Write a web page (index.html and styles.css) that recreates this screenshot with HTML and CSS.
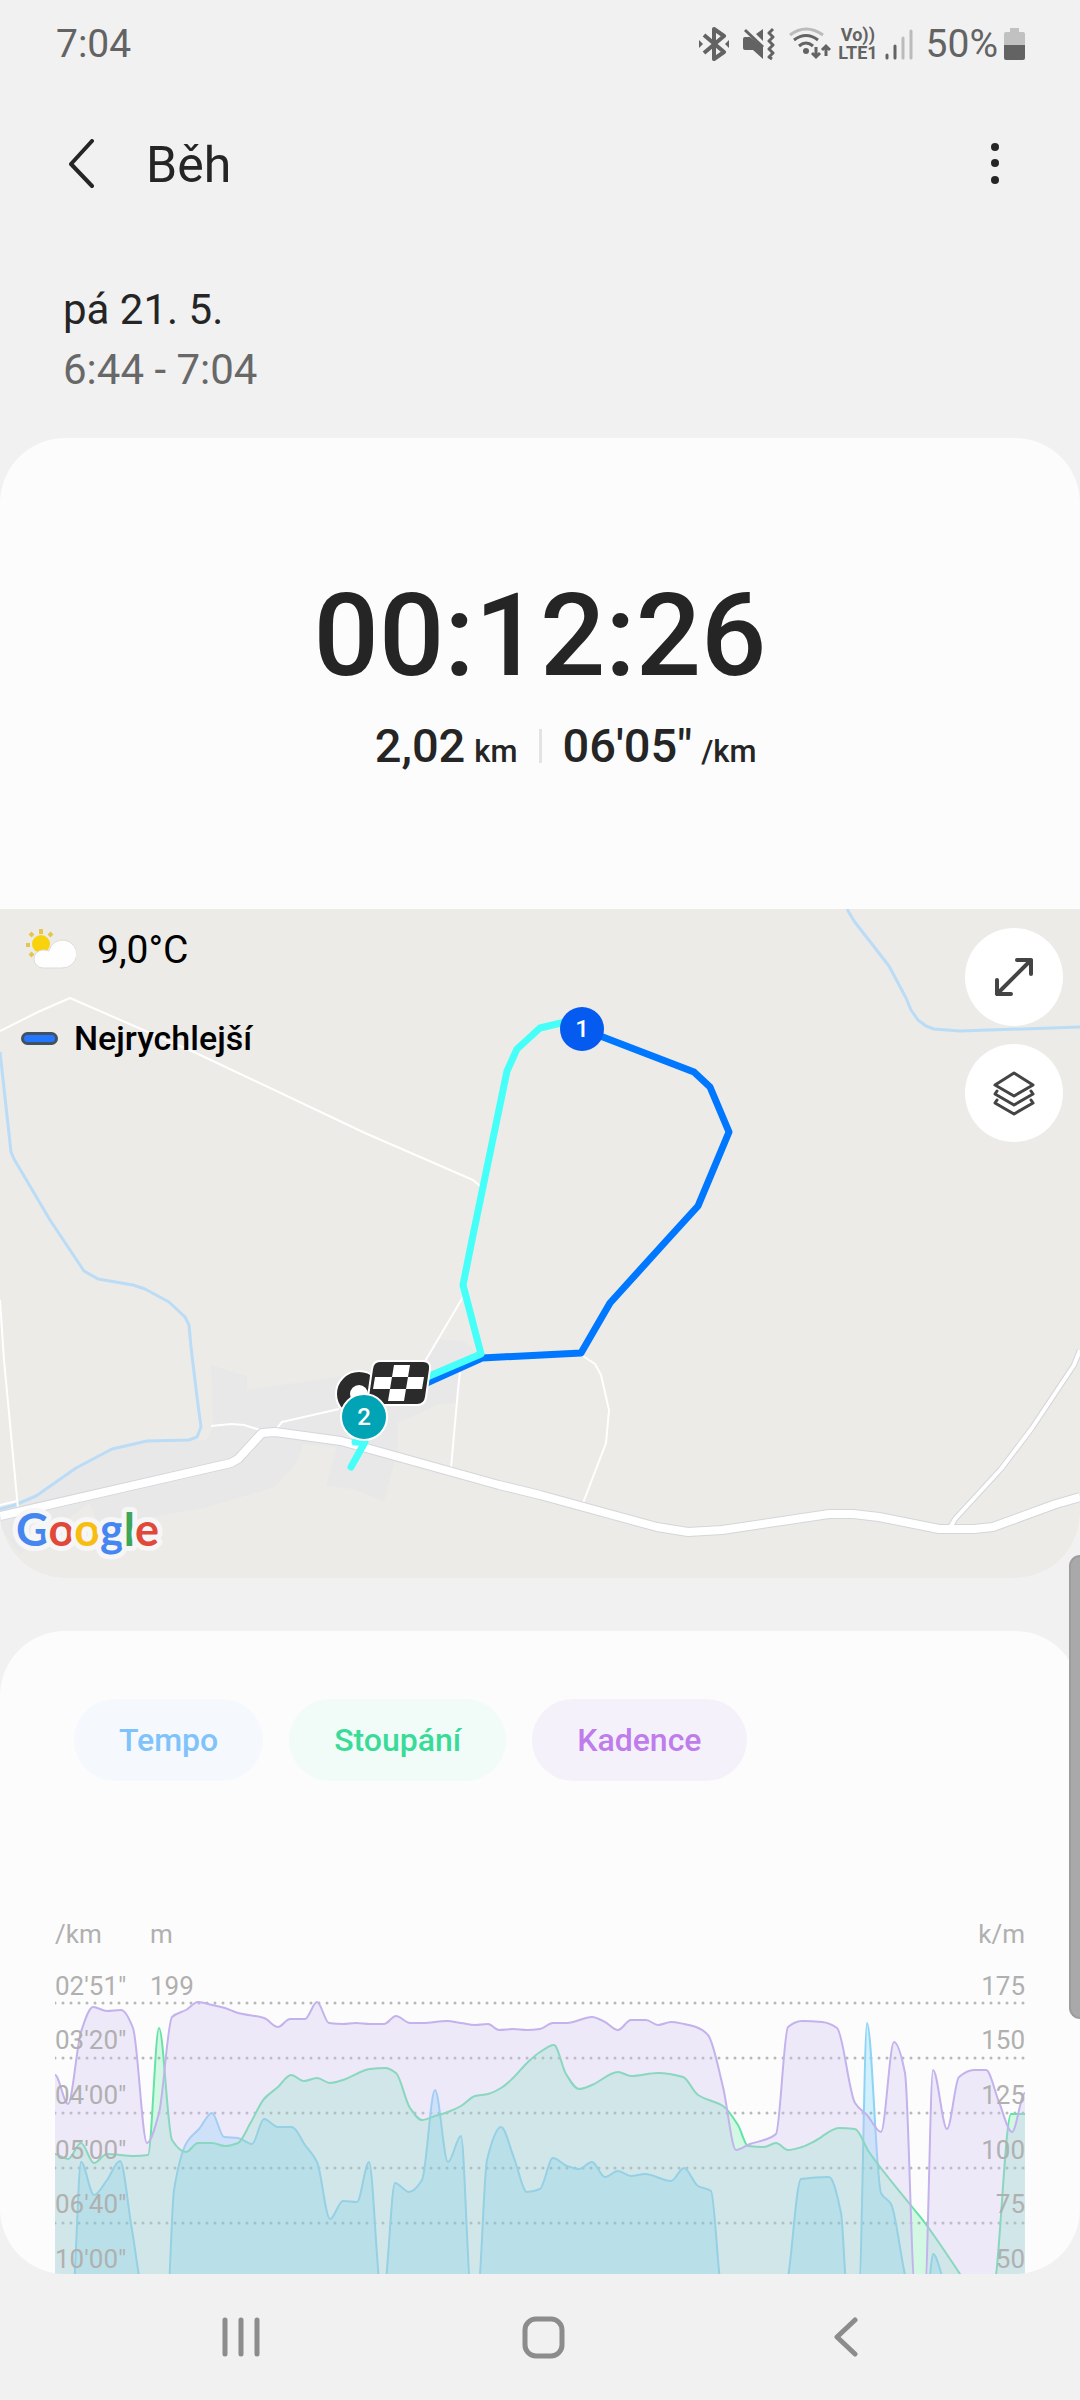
FILE: index.html
```
<!DOCTYPE html>
<html lang="cs">

<head>
    <meta charset="UTF-8">
    <meta name="viewport" content="width=device-width, initial-scale=1">
    <title>Běh</title>
    <link rel="stylesheet" href="styles.css">
</head>

<body>

    <div class="status-bar">
        <span class="clock">7:04</span>
        <div class="status-icons">
            <svg class="ic-bt" width="30" height="34" viewBox="0 0 30 34">
                <path d="M5 8 L25 25 L15 32 V2 L25 9 L5 26" fill="none" stroke="#636363" stroke-width="4" stroke-linejoin="round"/>
                <path d="M0 13 L4 17 L0 21 Z M30 13 L26 17 L30 21 Z" fill="#636363"/>
            </svg>
            <svg class="ic-mute" width="32" height="34" viewBox="0 0 32 34">
                <path d="M2 10 H7 L20 20 V32 L10 23 H2 Q0 23 0 21 V12 Q0 10 2 10 Z M20 2 V14 L13 7 Z" fill="#636363"/>
                <path d="M2 3 L20 20" stroke="#636363" stroke-width="3"/>
                <path d="M30 2 L26 6 L30 10 L26 14 L30 18 L26 22 L30 26 L26 30 L29 32" fill="none" stroke="#636363" stroke-width="3" stroke-linejoin="round"/>
            </svg>
            <svg class="ic-wifi" width="42" height="34" viewBox="0 0 42 34">
                <path d="M1 8 Q17 -4 34 8" fill="none" stroke="#bbb" stroke-width="3"/>
                <path d="M5 13 Q17 4 29 13 M10 19 Q17 13 24 19" fill="none" stroke="#636363" stroke-width="3"/>
                <circle cx="17" cy="24" r="3" fill="#636363"/>
                <path d="M27 20 V29 M23 26 L27 30 L31 26 M37 29 V20 M33 23 L37 19 L41 23" fill="none" stroke="#636363" stroke-width="3"/>
            </svg>
            <span class="volte"><span>Vo))</span><span>LTE1</span></span>
            <svg class="ic-signal" width="28" height="34" viewBox="0 0 28 34">
                <path d="M2 28 V31 M10 19 V31" stroke="#636363" stroke-width="3" stroke-linecap="round"/>
                <path d="M18 11 V31 M26 4 V31" stroke="#bbb" stroke-width="3" stroke-linecap="round"/>
            </svg>
            <span class="battery-text">50%</span>
            <svg class="ic-battery" width="21" height="34" viewBox="0 0 21 34">
                <path d="M6 1 H15 V5 H19 Q21 5 21 7 V18 H0 V7 Q0 5 2 5 H6 Z" fill="#c1c1c1"/>
                <path d="M0 18 H21 V31 Q21 33 19 33 H2 Q0 33 0 31 Z" fill="#636363"/>
            </svg>
        </div>
    </div>

    <header class="app-bar">
        <button class="icon-btn" type="button" aria-label="Zpět">
            <svg width="28" height="52" viewBox="0 0 28 52">
                <path d="M25 2 L4 25 L25 47" fill="none" stroke="#252525" stroke-width="4" stroke-linecap="round" stroke-linejoin="round"/>
            </svg>
        </button>
        <h1>Běh</h1>
        <button class="icon-btn more" type="button" aria-label="Další možnosti">
            <svg width="10" height="44" viewBox="0 0 10 44">
                <g fill="#252525"><circle cx="5" cy="4" r="4"/><circle cx="5" cy="20" r="4"/><circle cx="5" cy="37" r="4"/></g>
            </svg>
        </button>
    </header>

    <main>
        <div class="when">
            <p class="day">pá 21. 5.</p>
            <p class="hours">6:44 - 7:04</p>
        </div>

        <section class="card">
            <div class="timer">00:12:26</div>
            <div class="stats">
                <p class="stat left">2,02<small>km</small></p>
                <span class="divider"></span>
                <p class="stat">06'05"<small>/km</small></p>
            </div>

            <div class="map">
                <svg class="map-canvas" viewBox="0 0 1080 669">
                    <rect width="1080" height="669" fill="#ecebe7"/>
                    <!-- built-up area -->
                    <path fill="#e8e8e8" d="M211 456 L247 467 V481 L336 468 L427 450 L437 430 L465 433 L482 448 L460 463 L456 494 L439 495 L398 514 L397 544 L384 592 L353 580 L326 577 L337 538 L303 535 L297 553 L275 578 L207 598 L100 618 L89 594 L55 620 L20 645 L0 618 V598 L36 587 L76 559 L112 540 L147 532 L207 531 L213 518 Z"/>
                    <!-- rivers -->
                    <g fill="none" stroke="#bbdcf6" stroke-width="3" stroke-linejoin="round">
                        <path d="M0 143 L11 243 L14 250 L50 311 L84 362 L98 370 L133 376 L145 380 L169 393 L185 408 L189 416 L191 438 L197 488 L201 518 L197 528 L189 531 L147 532 L112 540 L76 559 L36 587 L15 596 L0 600"/>
                        <path d="M847 0 L854 12 L889 57 L906 89 L911 101 L918 111 L926 117 L934 120 L960 122 L1080 118"/>
                    </g>
                    <!-- paths -->
                    <g fill="none" stroke="#fff" stroke-width="2" stroke-linejoin="round">
                        <path d="M0 122 L38 103 L70 89 L196 144 L365 224 L473 271 L480 277"/>
                        <path d="M0 391 L4 451 L17 589 L18 600 M0 596 L17 592"/>
                        <path d="M583 447 L595 455 L601 466 L609 501 L606 534 L583 594"/>
                        <path d="M460 463 L458 481 L451 559 M463 388 L424 454"/>
                        <path d="M277 519 L282 513 L339 500 M211 517 L231 515 L244 516 L260 521"/>
                    </g>
                    <!-- roads -->
                    <g fill="none" stroke-linejoin="round">
                        <path stroke="#d3d6da" stroke-width="6" d="M951 617 L955 610 L1001 560 L1032 519 L1074 456 L1080 441"/>
                        <path stroke="#d3d6da" stroke-width="10" d="M0 607 L231 554 L238 550 L262 524 L275 523 L341 532 L499 576 L540 586 L657 618 L688 623 L722 621 L829 605 H853 L879 608 L939 620 H974 L993 618 L1056 595 L1080 588"/>
                        <path stroke="#fff" stroke-width="4" d="M951 617 L955 610 L1001 560 L1032 519 L1074 456 L1080 441"/>
                        <path stroke="#fff" stroke-width="8" d="M0 607 L231 554 L238 550 L262 524 L275 523 L341 532 L499 576 L540 586 L657 618 L688 623 L722 621 L829 605 H853 L879 608 L939 620 H974 L993 618 L1056 595 L1080 588"/>
                    </g>
                    <!-- track -->
                    <g fill="none" stroke-width="7" stroke-linejoin="round" stroke-linecap="round">
                        <path stroke="#0077ff" d="M582 120 L694 163 L710 178 L729 223 L698 297 L667 331 L610 394 L581 444 L482 449 L400 486"/>
                        <path stroke="#45fff8" d="M582 109 L561 114 L540 119 L517 140 L507 162 L472 331 L463 376 L481 445 L420 471"/>
                        <path stroke="#45fff8" d="M355 533 L365 533 L351 558"/>
                    </g>
                    <!-- start -->
                    <circle cx="359" cy="485" r="23" fill="#2b2b2b" stroke="#fff" stroke-width="2"/>
                    <circle cx="359" cy="485" r="9" fill="#fff"/>
                    <!-- finish flag -->
                    <path d="M380 452 H423 Q431 452 430 460 L426 488 Q425 496 417 496 H375 Q367 496 368 488 L372 460 Q373 452 380 452 Z" fill="#2b2b2b" stroke="#fff" stroke-width="2"/>
                    <path d="M394 456 H410 L408 468 H392 Z M375 468 H392 L390 480 H373 Z M408 468 H424 L422 480 H406 Z M390 480 H406 L404 492 H388 Z" fill="#fff"/>
                    <!-- kilometre marks -->
                    <g class="km-mark">
                        <circle cx="582" cy="120" r="22" fill="#055bef"/>
                        <text x="582" y="128">1</text>
                        <circle cx="364" cy="508" r="23" fill="#00a4b5" stroke="#fff" stroke-width="2"/>
                        <text x="364" y="516">2</text>
                    </g>
                    <text class="google" x="16" y="637"><tspan fill="#4686f0">G</tspan><tspan fill="#e04839">o</tspan><tspan fill="#f8bd12">o</tspan><tspan fill="#4686f0">g</tspan><tspan fill="#3ca757">l</tspan><tspan fill="#e04839">e</tspan></text>
                </svg>

                <div class="map-info">
                    <div class="weather">
                        <svg width="50" height="42" viewBox="0 0 50 42">
                            <path d="M15 0 V5 M4 4 L7 7 M26 4 L23 7 M0 16 H4 M4 27 L7 24" stroke="#e2c64f" stroke-width="4"/>
                            <circle cx="15" cy="15" r="9" fill="#f8d20c"/>
                            <path d="M17 39 A9 9 0 0 1 17 21 Q20 21 23 22 A14 14 0 1 1 36 39 Z" fill="#fefefe" stroke="#dddcd8" stroke-width="1"/>
                        </svg>
                        <span>9,0°C</span>
                    </div>
                    <div class="legend"><i></i><span>Nejrychlejší</span></div>
                </div>

                <div class="map-tools">
                    <button type="button" aria-label="Zvětšit mapu">
                        <svg width="44" height="44" viewBox="0 0 44 44">
                            <path d="M5 39 L39 5 M25 5 H39 V19 M5 25 V39 H19" fill="none" stroke="#444" stroke-width="4" stroke-linecap="round" stroke-linejoin="round"/>
                        </svg>
                    </button>
                    <button type="button" aria-label="Vrstvy">
                        <svg width="46" height="48" viewBox="0 0 46 48">
                            <path d="M23 4 L42 16 L23 27 L4 16 Z M6 22 L4 25 L23 36 L42 25 L40 22 M6 31 L4 34 L23 45 L42 34 L40 31" fill="none" stroke="#444" stroke-width="3" stroke-linecap="round" stroke-linejoin="round"/>
                        </svg>
                    </button>
                </div>
            </div>
        </section>

        <section class="card chart-card">
            <div class="series">
                <button class="pace" type="button">Tempo</button>
                <button class="climb" type="button">Stoupání</button>
                <button class="cadence" type="button">Kadence</button>
            </div>
            <div class="axis-head">
                <span class="axis-pace">/km</span><span>m</span><span class="axis-right">k/m</span>
            </div>
            <div class="plot">
                <svg id="chart" viewBox="0 0 970 328" preserveAspectRatio="none"></svg>
                <ul class="axis">
                    <li><span class="axis-pace">02'51"</span><span>199</span><span class="axis-right">175</span></li>
                    <li><span class="axis-pace">03'20"</span><span class="axis-right">150</span></li>
                    <li><span class="axis-pace">04'00"</span><span class="axis-right">125</span></li>
                    <li><span class="axis-pace">05'00"</span><span class="axis-right">100</span></li>
                    <li><span class="axis-pace">06'40"</span><span class="axis-right">75</span></li>
                    <li><span class="axis-pace">10'00"</span><span class="axis-right">50</span></li>
                </ul>
            </div>
        </section>
    </main>

    <div class="scroll-thumb"></div>

    <nav class="nav-bar">
        <button type="button" aria-label="Poslední aplikace">
            <svg width="42" height="42" viewBox="0 0 42 42">
                <path d="M5 4 V38 M21 4 V38 M37 4 V38" stroke="#8c8c8c" stroke-width="5" stroke-linecap="round"/>
            </svg>
        </button>
        <button type="button" aria-label="Domů">
            <svg width="44" height="44" viewBox="0 0 44 44">
                <rect x="4" y="4" width="37" height="37" rx="11" fill="none" stroke="#8c8c8c" stroke-width="5"/>
            </svg>
        </button>
        <button type="button" aria-label="Zpět">
            <svg width="26" height="42" viewBox="0 0 26 42">
                <path d="M23 4 L5 21 L23 38" fill="none" stroke="#8c8c8c" stroke-width="5" stroke-linecap="round" stroke-linejoin="round"/>
            </svg>
        </button>
    </nav>

    <script src="chart.js"></script>

</body>

</html>
```

FILE: styles.css
```
* {
    box-sizing: border-box;
}

body {
    position: relative;
    margin: 0;
    background: #f1f1f1;
    color: #252525;
    font-family: Roboto, "Noto Sans", sans-serif;
}

h1, p, ul {
    margin: 0;
    padding: 0;
    font-weight: 400;
}

button {
    padding: 0;
    border: 0;
    background: none;
    font-family: inherit;
}

svg {
    display: block;
}

/* status bar */
.status-bar {
    display: flex;
    justify-content: space-between;
    align-items: center;
    height: 88px;
    padding: 0 55px 0 56px;
    color: #636363;
    font-size: 39px;
}

.status-icons {
    display: flex;
    align-items: center;
}

.ic-mute, .ic-wifi {
    margin-left: 14px;
}

.volte {
    display: flex;
    flex-direction: column;
    margin: 0 7px;
    font-size: 18px;
    font-weight: 700;
    line-height: 18px;
    text-align: center;
}

.battery-text {
    margin: 0 6px 0 13px;
}

/* header */
.app-bar {
    display: flex;
    align-items: center;
    height: 154px;
    padding: 0 80px 0 67px;
}

.app-bar h1 {
    flex: 1;
    margin-left: 51px;
    font-size: 50px;
}

.when {
    padding: 38px 63px;
    font-size: 42px;
    line-height: 60px;
}

.hours {
    color: #686868;
}

/* cards */
.card {
    overflow: hidden;
    border-radius: 65px;
    background: #fcfcfc;
}

.timer {
    padding-top: 138px;
    font-size: 115px;
    font-weight: 500;
    line-height: 120px;
    text-align: center;
}

.stats {
    display: grid;
    grid-template-columns: 1fr auto 1fr;
    align-items: center;
    gap: 21px;
    margin-top: 22px;
    padding-bottom: 135px;
}

.stat {
    font-size: 47px;
    font-weight: 500;
    line-height: 56px;
}

.stat small {
    margin-left: 9px;
    font-size: 31px;
    line-height: 31px;
}

.left {
    text-align: right;
}

.divider {
    width: 3px;
    height: 34px;
    background: #e3e3e3;
}

/* map */
.map {
    position: relative;
}

.map-canvas {
    width: 100%;
}

.km-mark {
    fill: #fff;
    font-size: 24px;
    font-weight: 500;
    text-anchor: middle;
}

.google {
    font-family: Lato, sans-serif;
    font-size: 45px;
    font-weight: 700;
    paint-order: stroke;
    stroke: #f6f6f6;
    stroke-width: 10px;
    stroke-linejoin: round;
}

.map-info {
    position: absolute;
    top: 17px;
    left: 21px;
    color: #000;
}

.weather {
    display: flex;
    align-items: center;
    gap: 21px;
    padding-left: 5px;
    font-size: 39px;
    line-height: 48px;
}

.legend {
    display: flex;
    align-items: center;
    gap: 16px;
    margin-top: 44px;
    font-size: 34px;
    font-weight: 500;
    line-height: 40px;
}

.legend i {
    width: 37px;
    height: 13px;
    border: 3px solid #43505f;
    border-radius: 7px;
    background: #2476ff;
}

.map-tools {
    position: absolute;
    top: 19px;
    right: 17px;
    display: grid;
    gap: 18px;
}

.map-tools button {
    display: flex;
    align-items: center;
    justify-content: center;
    width: 98px;
    height: 98px;
    border-radius: 50%;
    background: #fff;
}

/* chart */
.chart-card {
    margin-top: 53px;
    padding: 68px 55px 0;
}

.series {
    display: flex;
    gap: 26px;
    padding-left: 19px;
}

.series button {
    height: 82px;
    padding: 0 45px;
    border-radius: 41px;
    font-size: 32px;
    font-weight: 500;
}

.series .pace {
    background: #f5f9fd;
    color: #80c3fb;
}

.series .climb {
    background: #f1fcf8;
    color: #3adb98;
}

.series .cadence {
    background: #f5f1fb;
    color: #be7dea;
}

.axis-head, .axis li {
    display: flex;
    align-items: flex-end;
    color: #b0b0b0;
    font-size: 26px;
    line-height: 28px;
}

.axis-head {
    margin-top: 139px;
}

.axis-pace {
    width: 95px;
}

.axis-right {
    margin-left: auto;
}

/* last row runs slightly under the screen edge */
.plot {
    position: relative;
    height: 328px;
    margin-bottom: -2px;
}

.plot svg {
    position: absolute;
    width: 100%;
    height: 100%;
}

.axis {
    position: relative;
    display: grid;
    grid-template-rows: repeat(6, 1fr);
    height: 100%;
}

.axis li {
    padding-bottom: 3px;
}

.grid-line {
    fill: none;
    stroke: #b8b8b8;
    stroke-width: 3px;
    stroke-linecap: round;
    stroke-dasharray: 0 8;
}

.area-pace {
    fill: rgba(32, 197, 255, .2);
    stroke: #8cd3f5;
}

.area-climb {
    fill: rgba(47, 237, 137, .2);
    stroke: #66e2a6;
}

.area-cadence {
    fill: rgba(209, 193, 243, .32);
    stroke: #c3b2ec;
}

.area {
    stroke-width: 2px;
}

/* scrollbar + navigation */
.scroll-thumb {
    position: absolute;
    top: 1555px;
    right: 0;
    width: 11px;
    height: 464px;
    border: 2px solid #9d9d9d;
    border-right: 0;
    border-radius: 11px 0 0 11px;
    background: #a9a9a9;
}

.nav-bar {
    display: grid;
    grid-template-columns: repeat(3, 1fr);
    height: 126px;
    padding: 0 84px 0 90px;
}

.nav-bar button {
    display: flex;
    align-items: center;
    justify-content: center;
}
```

FILE: chart.js
```
// [x, y] samples in the 970 x 328 plot, 340 = under the bottom edge
var pace = [
    [0, 340], [18, 340], [26, 214], [39, 247], [52, 232], [65, 213], [77, 282], [88, 340],
    [113, 340], [119, 242], [132, 194], [144, 181], [157, 165], [169, 189], [183, 190], [197, 196],
    [209, 171], [223, 179], [237, 179], [250, 197], [262, 214], [275, 271], [288, 253], [302, 254],
    [314, 214], [326, 340], [329, 340], [340, 235], [354, 244], [367, 232], [380, 142], [393, 214],
    [406, 188], [416, 340], [423, 340], [432, 212], [446, 179], [459, 210], [472, 244], [485, 241],
    [498, 210], [512, 218], [524, 221], [537, 214], [550, 229], [563, 223], [576, 228], [590, 226],
    [616, 233], [629, 220], [643, 238], [656, 243], [667, 340], [730, 340], [746, 231], [774, 229],
    [786, 265], [792, 340], [804, 340], [812, 75], [826, 245], [836, 256], [855, 340], [873, 340],
    [878, 306], [893, 340], [970, 340]
];
var climb = [
    [0, 206], [13, 211], [26, 195], [39, 215], [52, 206], [79, 208], [93, 207], [104, 80],
    [117, 192], [131, 204], [143, 195], [157, 195], [170, 198], [183, 195], [196, 174], [209, 151],
    [223, 139], [236, 127], [249, 133], [262, 130], [275, 135], [288, 132], [315, 121], [330, 120],
    [341, 125], [355, 160], [367, 172], [380, 168], [393, 164], [406, 158], [420, 148], [433, 146],
    [446, 140], [458, 130], [472, 115], [485, 104], [499, 97], [511, 126], [524, 141], [537, 137],
    [563, 124], [576, 128], [603, 125], [628, 129], [643, 147], [668, 158], [683, 177], [693, 198],
    [709, 199], [721, 195], [733, 202], [747, 199], [760, 193], [784, 180], [800, 181], [814, 204],
    [858, 260], [870, 275], [905, 326], [914, 340], [938, 340], [956, 166], [970, 166]
];
var cadence = [
    [0, 127], [13, 156], [26, 84], [38, 59], [52, 63], [66, 62], [78, 80], [92, 195],
    [104, 165], [117, 69], [131, 62], [143, 54], [157, 57], [170, 60], [183, 65], [209, 70],
    [223, 79], [235, 71], [250, 71], [262, 54], [274, 75], [288, 76], [301, 75], [315, 76],
    [329, 76], [341, 68], [355, 75], [368, 75], [392, 73], [406, 75], [420, 77], [433, 76],
    [444, 82], [458, 81], [472, 82], [485, 81], [498, 75], [512, 75], [537, 69], [550, 74],
    [563, 82], [576, 72], [591, 72], [603, 77], [616, 74], [629, 76], [641, 79], [653, 87],
    [668, 139], [681, 202], [695, 196], [709, 192], [721, 186], [733, 79], [747, 73], [767, 74],
    [782, 80], [800, 155], [812, 167], [826, 184], [839, 94], [850, 125], [860, 340], [870, 340],
    [878, 122], [892, 181], [904, 129], [919, 122], [931, 122], [944, 154], [957, 184], [970, 145]
];

// monotone slopes, so the curve never overshoots a sample
function slopes(p) {
    var m = [];
    for (var i = 0; i < p.length; i++) {
        if (i === 0 || i === p.length - 1) {
            m.push(0);
            continue;
        }
        var a = (p[i][1] - p[i - 1][1]) / (p[i][0] - p[i - 1][0]);
        var b = (p[i + 1][1] - p[i][1]) / (p[i + 1][0] - p[i][0]);
        m.push(a * b <= 0 ? 0 : 2 * a * b / (a + b));
    }
    return m;
}

function area(p) {
    var m = slopes(p);
    var d = 'M-5 340 L-5 ' + p[0][1] + ' L' + p[0];
    for (var i = 1; i < p.length; i++) {
        var h = (p[i][0] - p[i - 1][0]) / 3;
        d += ' C' + [p[i - 1][0] + h, p[i - 1][1] + m[i - 1] * h, p[i][0] - h, p[i][1] - m[i] * h, p[i][0], p[i][1]];
    }
    return d + ' L975 ' + p[p.length - 1][1] + ' L975 340 Z';
}

var html = '';
for (var y = 55; y < 300; y += 55) {
    html += '<path class="grid-line" d="M0 ' + y + ' H970"/>';
}
html += '<path class="area area-pace" d="' + area(pace) + '"/>';
html += '<path class="area area-climb" d="' + area(climb) + '"/>';
html += '<path class="area area-cadence" d="' + area(cadence) + '"/>';
document.getElementById('chart').innerHTML = html;
```
